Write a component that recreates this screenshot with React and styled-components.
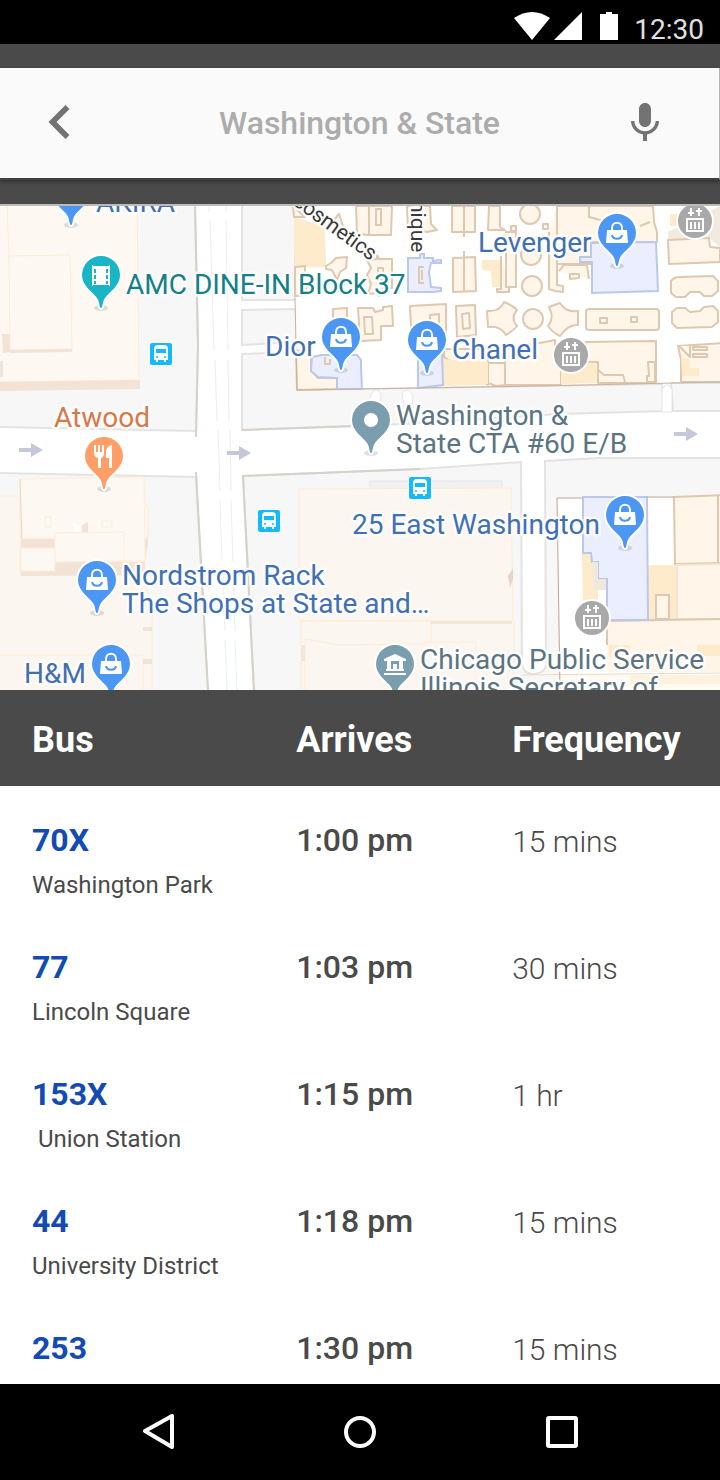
import React from "react";
import styled, { createGlobalStyle } from "styled-components";

const GlobalStyle = createGlobalStyle`
  *, *::before, *::after { box-sizing: border-box; }
  body {
    margin: 0;
    background: #ffffff;
    color: #4a4a4a;
    font-family: Roboto, "Liberation Sans", sans-serif;
  }
`;

const Screen = styled.div`
  display: flex;
  flex-direction: column;
  height: 100vh;
  min-height: 900px;
`;

const StatusBar = styled.div`
  display: flex;
  flex: none;
  align-items: flex-end;
  justify-content: flex-end;
  height: 44px;
  padding: 0 16px 0 0;
  background: #000000;
`;

const StatusIcons = styled.svg`
  display: block;
  width: 104px;
  height: 28px;
  margin: 0 16px 4px 0;
  fill: #ffffff;
`;

const Clock = styled.time`
  color: #e0e0e0;
  font-size: 28px;
  line-height: 28px;
`;

const Toolbar = styled.header`
  flex: none;
  padding: 24px 0;
  background: #4a4a4a;
  border-bottom: 2px solid #bdbab8;
`;

const SearchBar = styled.form`
  display: flex;
  align-items: center;
  height: 112px;
  padding: 0 40px;
  background: #fafafa;
  border-right: 1px solid #b4b4b4;
  border-bottom: 2px solid #404040;
  box-shadow: 0 2px 4px rgba(0, 0, 0, 0.35);
`;

const IconButton = styled.button`
  display: flex;
  flex: none;
  align-items: center;
  justify-content: ${(p) => p.$align || "center"};
  width: 64px;
  height: 64px;
  padding: 0 10px 0 8px;
  border: 0;
  background: none;
  color: #737373;
  cursor: pointer;

  svg { display: block; flex: none; fill: currentColor; }
`;

const SearchInput = styled.input`
  flex: 1;
  min-width: 0;
  padding: 0;
  border: 0;
  outline: 0;
  background: none;
  color: #4a4a4a;
  font: 500 32px/40px Roboto, "Liberation Sans", sans-serif;
  text-align: center;

  &::placeholder { color: #acacac; opacity: 1; }
`;

const MapView = styled.svg`
  display: block;
  flex: none;
  width: 100%;
  max-height: 50vh;
  background: #ffffff;
  font-family: Roboto, "Liberation Sans", sans-serif;
`;

const MapLabel = styled.text`
  fill: ${(p) => p.$color};
  stroke: rgba(255, 255, 255, 0.85);
  stroke-width: 5px;
  stroke-linejoin: round;
  paint-order: stroke;
  font-size: ${(p) => p.$size || 28}px;
`;

const Schedule = styled.main`
  flex: 1;
  min-height: 0;
  overflow-y: auto;
  scrollbar-width: none;
`;

const Timetable = styled.table`
  width: 100%;
  table-layout: fixed;
  border-collapse: collapse;
`;

const HeadCell = styled.th`
  position: sticky;
  top: 0;
  width: ${(p) => p.$width};
  height: 96px;
  padding: 4px 0 0 ${(p) => (p.$first ? 32 : 1)}px;
  background: #4a4a4a;
  color: #ffffff;
  font-size: 36px;
  font-weight: 700;
  line-height: 40px;
  text-align: left;
`;

const Row = styled.tr`
  height: 127px;
  vertical-align: top;
`;

const RouteCell = styled.th`
  padding: 34px 0 0 32px;
  font-weight: 400;
  text-align: left;
`;

const RouteLink = styled.a`
  display: block;
  color: #134bb3;
  font-size: 32px;
  font-weight: 700;
  line-height: 40px;
  text-decoration: none;
`;

const Destination = styled.span`
  display: block;
  padding-top: 9px;
  font-size: 24px;
  line-height: 32px;
`;

const ArrivalCell = styled.td`
  padding: 34px 0 0 1px;
  font-size: 32px;
  font-weight: 500;
  line-height: 40px;
`;

const FrequencyCell = styled.td`
  padding: 36px 0 0 1px;
  font-size: 30px;
  font-weight: 300;
  line-height: 40px;
`;

const NavBar = styled.nav`
  display: grid;
  flex: none;
  grid-template-columns: repeat(3, 1fr);
  height: 96px;
  padding: 0 8%;
  background: #000000;
`;

const NavButton = styled.button`
  display: flex;
  align-items: center;
  justify-content: center;
  padding: 0;
  border: 0;
  background: none;
  cursor: pointer;

  svg {
    fill: none;
    stroke: #ffffff;
    stroke-width: 4;
    stroke-linejoin: round;
  }
`;

const BLUE = "#3f70b5";
const SLATE = "#5b7482";

/* Pin artwork, drawn round the middle of the pin's head. */
const BagGlyph = () => (
  <g>
    <path d="M-10 -3H10L11 10H-11Z" fill="#fff" />
    <path d="M-5 -2V-5C-5 -12 5 -12 5 -5V-2" fill="none" stroke="#fff" strokeWidth="2" />
    <path d="M-5 2C-4 7 4 7 5 2" fill="none" stroke="#4b97f3" strokeWidth="2" />
  </g>
);

const FilmGlyph = () => (
  <g>
    <path d="M-9 -10H-8V-9H8V-10H9V11H8V10H-8V11H-9Z" fill="#fff" />
    <path d="M-6 -6V9M6 -6V9" stroke="#19b5c6" strokeWidth="2" strokeDasharray="4 2" />
  </g>
);

const ForkGlyph = () => (
  <g>
    <path d="M-10 -11H-8V-4H-6V-11H-4V-4H-2V-11H0V-3Q0 1 -3 2V12H-6V2Q-10 1 -10 -3Z" fill="#fff" />
    <path d="M8 -11V12H5V2H2V-5Q3 -10 8 -11Z" fill="#fff" />
  </g>
);

const DotGlyph = () => <circle r="7" fill="#fff" />;

const CivicGlyph = () => (
  <g fill="#fff">
    <path d="M0 -10L11 -5V-3H-11V-5Z" />
    <path d="M-8 -3H-4V7H-8ZM-2 0H2V7H-2ZM4 -3H8V7H4Z" />
    <path d="M-9 5H9V7H-9ZM-11 9H11V11H-11Z" />
  </g>
);

const Pin = ({ x, y, color = "#4b97f3", children }) => (
  <g transform={`translate(${x} ${y})`}>
    <ellipse cy="33" rx="7" ry="3" fill="#000" opacity="0.12" />
    <path
      d="M0 33C-2 33 -1 27 -4 23C-8 17 -19 11 -19 0A19 19 0 0 1 19 0C19 11 8 17 4 23C1 27 2 33 0 33Z"
      fill={color}
      stroke="#fff"
      strokeWidth="4"
      paintOrder="stroke"
    />
    {children}
  </g>
);

const Landmark = ({ x, y }) => (
  <g transform={`translate(${x} ${y})`} fill="none" stroke="#fff">
    <circle r="18" fill="#a9a9a9" strokeWidth="2" />
    <path d="M-8 -2H8V10H-8ZM-4 1V8M0 1V8M4 1V8" strokeWidth="2" />
    <path d="M-4 -13V-5M-7 -8H-1M4 -13V-5M1 -10H7" strokeWidth="2" />
  </g>
);

const BusStop = ({ x, y }) => (
  <g transform={`translate(${x} ${y})`}>
    <rect x="-12" y="-12" width="24" height="24" rx="3" fill="#fff" />
    <rect x="-11" y="-11" width="22" height="22" rx="2" fill="#12baff" />
    <path d="M-7 -5Q-7 -9 -3 -9H3Q7 -9 7 -5V6H5V8H3V6H-3V8H-5V6H-7Z" fill="#fff" />
    <path d="M-5 -5H5V-1H-5Z" fill="#12baff" />
    <circle cx="-4" cy="3" r="1" fill="#12baff" />
    <circle cx="4" cy="3" r="1" fill="#12baff" />
  </g>
);

const OneWay = ({ x, y }) => (
  <path transform={`translate(${x} ${y})`} d="M-12 -2H0V-7L12 0L0 7V2H-12Z" fill="#c5c8d9" />
);

const Blocks = () => (
  <g>
    <g fill="#f7f7f7" stroke="#e3e3e1" strokeWidth="2">
      <path d="M-2 200H195L198 345L196 431L-2 427Z" />
      <path d="M-2 473L196 477L208 694H-2Z" />
      <path d="M242 200H295V300H242Z" />
      <path d="M242 310L296 309V342L242 345Z" />
      <path d="M242 354L297 352V390L662 384L664 411L560 414L400 424L242 430Z" />
      <path d="M671 383H724V411H673Z" />
      <path d="M243 476L420 469L521 462L522 665Q524 674 534 674Q545 673 546 665L545 461L600 458H724V694H254Z" />
    </g>
    <g fill="none" stroke="#d6d1c9" strokeWidth="2">
      <path d="M195 206L198 345L196 437M196 472L208 690" />
      <path d="M242 430L360 426M420 469L243 476L254 690" />
    </g>
    <g fill="#fff" stroke="#e6e6e4" strokeWidth="1">
      <path d="M369 412L371 394Q376 386 381 394L380 411Z" />
      <path d="M402 394Q407 386 412 394L413 410H405Z" />
      <path d="M662 412V390Q667 379 672 390V412Z" />
    </g>
    <g fill="none" stroke="#e6eff5" strokeWidth="1">
      <path d="M209 206V212M210 220L214 351M215 360L217 421M218 430L220 491M220 500L222 561M223 570L225 631M225 640L227 690" />
      <path d="M226 206V212M226 220L228 351M228 360L229 421M230 430L231 491M231 500L233 561M233 570L235 631M235 640L237 690" />
    </g>
  </g>
);

const WestBuildings = () => (
  <g>
    <g fill="#fdf9f2" stroke="#fdecd5" strokeWidth="1">
      <path d="M-2 200H137L139 380L-2 382Z" />
      <path d="M7 206L9 256L70 255L72 349L10 350L9 256" />
    </g>
    <g fill="#f3e3d6">
      <path d="M0 382L140 380V389L0 391ZM10 350L72 349V352L10 353ZM2 334H10V352L3 353ZM0 361H3V377H0Z" />
    </g>
    <g fill="#fbf6ef" stroke="#fdecd5" strokeWidth="1">
      <path d="M-2 496H20V575H142L152 605V694H-2Z" />
      <path d="M0 655H143V690" fill="none" />
    </g>
    <path d="M21 539H55V562H145V572L142 575L21 576ZM143 627H152V631H143ZM143 659H152V664H143ZM145 540L148 534V546L145 558Z" fill="#f3e3d6" />
    <g fill="#fdf9f2" stroke="#fdecd5" strokeWidth="1">
      <path d="M20 479L144 477L145 561H55V538H21Z" />
      <path d="M21 548H55V571H21Z" />
      <path d="M55 533L124 532V561L55 562Z" />
      <path d="M45 517H51V527H45ZM102 521H112V527H102ZM144 500L148 508V535" />
    </g>
    <path d="M20 479L22 538" fill="none" stroke="#e9d7c5" strokeWidth="1" />
    <path d="M73 523L81 526V532L74 531Z" fill="#fff" />
    <path d="M82 525L88 522V532H82Z" fill="#f3e3d6" />

    <path d="M370 481H502V489H370Z" fill="#f1f1f1" stroke="#e6e6e6" />
    <g fill="#fbf6ef" stroke="#fdecd5" strokeWidth="1">
      <path d="M299 489L511 488L513 621H299Z" />
      <path d="M301 621H514V694H301Z" />
      <path d="M305 690V639L340 645L425 644V642H476V652M431 621V643" />
    </g>
    <path d="M431 621H512V624H431ZM301 645H305V661H301Z" fill="#f0e7d8" />
    <path d="M508 576L513 568V579L510 588Z" fill="#e8d5c3" />
  </g>
);

const MallBuildings = () => (
  <g>
    <path d="M294 206H720V381L297 389Z" fill="#fff" />
    <g fill="#fdebcb">
      <path d="M294 217L325 227L326 267L295 268Z" />
      <path d="M443 358L488 360V385L443 386Z" />
      <path d="M482 260H500L501 287H492L491 271L482 270Z" />
      <path d="M670 214H682V226H670Z" />
    </g>
    <path d="M668 232L720 206V247L709 238L668 240Z" fill="#f1ebdf" />
    <g fill="#fff6e9" stroke="#dfc8b0" strokeWidth="2" strokeLinejoin="round">
      <path d="M293 206L305 217H294Z" />
      <path d="M295 267L305 266V273L313 280L306 288V295L295 296Z" />
      <path d="M326 266L331 263L336 258L347 257L346 268L340 272L337 280L332 270L326 269Z" />
      <path d="M328 231L334 220L339 214L343 226L346 235Z" />
      <path d="M356 206H369V235L357 234ZM369 206H392L391 235L369 235ZM376 209H381V225H376Z" />
      <path d="M367 260L377 259V255L379 259H392V288L383 289L379 296L377 293L368 294L371 284L367 275L371 268ZM378 268H383V280H378Z" />
      <path d="M407 206H430L431 224L437 230L427 232L408 228Z" />
      <path d="M452 206H475V232H452ZM464 206V237" />
      <path d="M453 258L475 257L476 291L453 292ZM464 251V291" />
      <path d="M333 309L347 308V325H333Z" />
      <path d="M358 308H373L375 312L383 310V307L392 306L393 326H381V340L360 341ZM364 317H372L373 334H365Z" />
      <path d="M410 306L446 304V345L412 347ZM430 315L439 314V324H430Z" />
      <path d="M456 306L475 305L476 335L457 337ZM462 314L469 313L470 328L463 329Z" />
      <path d="M296 350L311 355V370L318 378H337V389L297 390Z" />
      <path d="M489 206H500V227L505 230H488Z" />
      <path d="M505 232H516V287H506V240M501 256V289H497V292H509V288" />
      <path d="M549 232V289L555 291L563 292V286L557 285V206" />
      <circle cx="530" cy="214" r="10" />
      <circle cx="531" cy="255" r="10" />
      <circle cx="532" cy="286" r="10" />
      <circle cx="533" cy="319" r="10" />
      <path d="M511 226H516V231H511ZM543 224H548V229H543Z" />
      <path d="M557 206H653L654 222L657 232V242H591V264H557Z" />
      <path d="M589 206V217L604 221L622 219M640 226L650 222" fill="none" />
      <path d="M559 271L564 265H587L589 279M570 274H579V278L570 279Z" />
      <path d="M487 311Q500 312 504 302Q512 305 517 310Q510 318 517 326Q514 330 506 335Q500 325 488 327Z" />
      <path d="M549 307L560 303Q566 313 578 311V325Q568 324 560 336Q552 332 548 326Q555 318 549 307Z" />
      <rect x="586" y="309" width="73" height="21" rx="3" />
      <path d="M600 318H607V323H600ZM631 317H637V322H631Z" />
      <path d="M668 240L709 238L710 247L720 248V262L669 264Z" />
      <path d="M671 281Q674 277 679 277L713 276L718 281V291L712 296H704L700 292H690L685 297H676L671 293Z" />
      <path d="M672 312L677 308H685L690 312L700 311L704 307L713 306L718 311V322L712 327L677 328L672 323Z" />
      <path d="M444 349H488V385L444 357Z" />
      <path d="M505 349L545 342L555 340V352L561 360V385H505Z" />
      <path d="M488 363H505V385L496 386L488 383Z" />
      <path d="M585 342L656 341V383H598V362H587Z" />
      <path d="M598 370L604 375H623L625 382M648 362H655V382H647V376H649Z" fill="none" />
      <path d="M678 346L724 343V382H681V360Z" />
      <path d="M693 347H707V350H693ZM693 354H707V357H693ZM679 346L690 357V346" />
    </g>
    <path d="M443 359L488 362V384L443 385ZM561 362L597 363V383L561 384ZM681 357L690 360V368H699V376H682Z" fill="#fdebcb" />
    <g fill="#ebeefe" stroke="#bcc8eb" strokeWidth="2">
      <path d="M408 258H420V254H424V258H433V261L441 260V263H431L429 272L431 287L441 288V291L433 292H408Z" />
      <path d="M312 357L322 355H357L361 360V367L362 389H337V378L318 377L311 371Z" />
      <path d="M418 353H442L443 385L418 388Z" />
      <path d="M591 243L656 242L658 291L592 293V262H580V257H591Z" />
    </g>
    <path d="M424 267H419V283H424M422 270V280M325 357V364H330V359" fill="none" stroke="#dfc8b0" strokeWidth="2" />
    <path d="M295 298L297 390L418 388L540 386L720 382" fill="none" stroke="#c9b39d" strokeWidth="1" />
  </g>
);

const SouthEastBuildings = () => (
  <g>
    <path d="M557 498L582 497H720V690H560Z" fill="#fff" />
    <g fill="#fdebcb">
      <path d="M582 553H592L594 590H598V607H583ZM648 565H676V620H648Z" />
    </g>
    <g fill="#fff6e9" stroke="#dfc8b0" strokeWidth="2">
      <path d="M674 497L724 495V563L675 564Z" />
      <path d="M677 565L724 564V619H677Z" stroke="#f0e5cf" />
      <path d="M656 595H669V619H656Z" />
      <path d="M607 621L724 619V672H607Z" stroke="none" />
      <path d="M607 645V621L724 619" fill="none" />
      <path d="M718 495V563" />
    </g>
    <path d="M583 497H647L648 620H607V579H598V562H592L591 553H583Z" fill="#ebeefe" stroke="#bcc8eb" strokeWidth="2" />
    <path d="M592 562H598V579H606V590H594Z" fill="#f0e9db" />
    <path d="M609 645H630V657H609ZM697 645H720V656H697ZM630 675H720V684H630Z" fill="#fdebcb" />
    <path d="M560 675H720V690H560Z" fill="#fff6e9" opacity="0.6" />
    <path d="M522 675L720 673" stroke="#ecd8c2" strokeWidth="1" />
    <path d="M582 498H557L560 690M647 497H674" fill="none" stroke="#b8a493" strokeWidth="1" />
  </g>
);

const labels = [
  { x: 96, y: 212, color: BLUE, text: "AKIRA" },
  { x: 126, y: 294, color: "#148087", text: "AMC DINE-IN Block 37" },
  { x: 478, y: 252, color: BLUE, text: "Levenger" },
  { x: 265, y: 356, color: BLUE, text: "Dior" },
  { x: 452, y: 359, color: BLUE, text: "Chanel" },
  { x: 54, y: 427, color: "#d5794a", text: "Atwood" },
  { x: 396, y: 425, color: SLATE, text: "Washington &" },
  { x: 396, y: 453, color: SLATE, text: "State CTA #60 E/B" },
  { x: 352, y: 534, color: BLUE, text: "25 East Washington" },
  { x: 122, y: 585, color: BLUE, text: "Nordstrom Rack" },
  { x: 122, y: 613, color: BLUE, text: "The Shops at State and…" },
  { x: 24, y: 683, color: BLUE, text: "H&M" },
  { x: 420, y: 669, color: SLATE, text: "Chicago Public Service" },
  { x: 420, y: 697, color: SLATE, text: "Illinois Secretary of" },
];

const StreetMap = () => (
  <MapView viewBox="0 206 720 484" preserveAspectRatio="xMidYMid slice" aria-label="Map around Washington & State">
    <Blocks />
    <WestBuildings />
    <MallBuildings />
    <SouthEastBuildings />

    <OneWay x={31} y={450} />
    <OneWay x={239} y={453} />
    <OneWay x={686} y={434} />
    <BusStop x={161} y={354} />
    <BusStop x={269} y={521} />
    <BusStop x={420} y={488} />
    <Landmark x={571} y={355} />
    <Landmark x={695} y={221} />
    <Landmark x={592} y={618} />

    <MapLabel $color="#383838" $size={21} transform="translate(292 204) rotate(36)">cosmetics</MapLabel>
    <MapLabel $color="#383838" $size={21} transform="translate(411 201) rotate(90)">nique</MapLabel>
    {labels.map((l) => (
      <MapLabel key={l.text} x={l.x} y={l.y} $color={l.color}>{l.text}</MapLabel>
    ))}

    <Pin x={71} y={192}><BagGlyph /></Pin>
    <Pin x={101} y={275} color="#19b5c6"><FilmGlyph /></Pin>
    <Pin x={617} y={233}><BagGlyph /></Pin>
    <Pin x={341} y={337}><BagGlyph /></Pin>
    <Pin x={427} y={340}><BagGlyph /></Pin>
    <Pin x={371} y={420} color="#7b9eae"><DotGlyph /></Pin>
    <Pin x={104} y={456} color="#ff9f67"><ForkGlyph /></Pin>
    <Pin x={625} y={515}><BagGlyph /></Pin>
    <Pin x={97} y={580}><BagGlyph /></Pin>
    <Pin x={111} y={664}><BagGlyph /></Pin>
    <Pin x={395} y={664} color="#7b9eae"><CivicGlyph /></Pin>
  </MapView>
);

const buses = [
  { route: "70X", to: "Washington Park", arrives: "1:00 pm", every: "15 mins" },
  { route: "77", to: "Lincoln Square", arrives: "1:03 pm", every: "30 mins" },
  { route: "153X", to: "\u00a0Union Station", arrives: "1:15 pm", every: "1 hr" },
  { route: "44", to: "University District", arrives: "1:18 pm", every: "15 mins" },
  { route: "253", arrives: "1:30 pm", every: "15 mins" },
];

export default function App() {
  return (
    <Screen>
      <GlobalStyle />
      <StatusBar>
        <StatusIcons viewBox="514 12 104 28" aria-hidden="true">
          <path d="M514 18Q532 6 550 18L532 40Z" />
          <path d="M554 40L582 12V40Z" />
          <path d="M600 14H606V12H612V14H618V40H600Z" />
        </StatusIcons>
        <Clock>12:30</Clock>
      </StatusBar>

      <Toolbar>
        <SearchBar onSubmit={(e) => e.preventDefault()}>
          <IconButton type="button" aria-label="Back" $align="flex-start">
            <svg width="22" height="36" viewBox="8 6 7.41 12.7">
              <path d="M15.41 7.41 14 6l-6 6 6 6 1.41-1.41L10.83 12z" />
            </svg>
          </IconButton>
          <SearchInput type="text" aria-label="Stop" placeholder="Washington & State" />
          <IconButton type="button" aria-label="Voice search" $align="flex-end">
            <svg width="48" height="48" viewBox="0 0 24 24">
              <path d="M12 14c1.66 0 2.99-1.34 2.99-3L15 5c0-1.66-1.34-3-3-3S9 3.34 9 5v6c0 1.66 1.34 3 3 3zm5.3-3c0 3-2.54 5.1-5.3 5.1S6.7 14 6.7 11H5c0 3.41 2.72 6.23 6 6.72V21h2v-3.28c3.28-.48 6-3.3 6-6.72h-1.7z" />
            </svg>
          </IconButton>
        </SearchBar>
      </Toolbar>

      <StreetMap />

      <Schedule>
        <Timetable>
          <thead>
            <tr>
              <HeadCell scope="col" $width="41%" $first>Bus</HeadCell>
              <HeadCell scope="col" $width="30%">Arrives</HeadCell>
              <HeadCell scope="col" $width="29%">Frequency</HeadCell>
            </tr>
          </thead>
          <tbody>
            {buses.map((bus) => (
              <Row key={bus.route}>
                <RouteCell scope="row">
                  <RouteLink href={`#${bus.route}`}>{bus.route}</RouteLink>
                  {bus.to && <Destination>{bus.to}</Destination>}
                </RouteCell>
                <ArrivalCell>{bus.arrives}</ArrivalCell>
                <FrequencyCell>{bus.every}</FrequencyCell>
              </Row>
            ))}
          </tbody>
        </Timetable>
      </Schedule>

      <NavBar aria-label="System">
        <NavButton type="button" aria-label="Back">
          <svg width="34" height="36" viewBox="0 0 34 36"><path d="M31 2V33L4 17Z" /></svg>
        </NavButton>
        <NavButton type="button" aria-label="Home">
          <svg width="36" height="36" viewBox="0 0 36 36"><circle cx="18" cy="18" r="14" /></svg>
        </NavButton>
        <NavButton type="button" aria-label="Recent apps">
          <svg width="36" height="36" viewBox="0 0 36 36"><rect x="4" y="4" width="28" height="28" rx="1" /></svg>
        </NavButton>
      </NavBar>
    </Screen>
  );
}
